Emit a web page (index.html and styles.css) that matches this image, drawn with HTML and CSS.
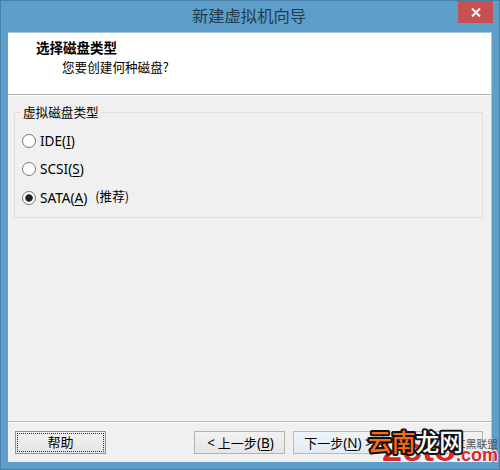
FILE: index.html
```html
<!DOCTYPE html>
<html lang="zh-CN">
<head>
<meta charset="utf-8">
<title>新建虚拟机向导</title>
<link rel="stylesheet" href="styles.css">
</head>
<body>
<div class="window">
  <header class="titlebar">
    <h1>新建虚拟机向导</h1>
    <button class="close"><svg width="10" height="9" viewBox="0 0 10 9"><path d="M1 0.5 9 8.5M9 0.5 1 8.5" stroke="#fff" stroke-width="2"/></svg></button>
  </header>
  <main class="client">
    <section class="intro">
      <h2>选择磁盘类型</h2>
      <p>您要创建何种磁盘?</p>
    </section>
    <section class="content">
      <fieldset class="group">
        <legend>虚拟磁盘类型</legend>
        <label class="option"><span class="radio"></span><span class="name">IDE(<u>I</u>)</span></label>
        <label class="option"><span class="radio"></span><span class="name">SCSI(<u>S</u>)</span></label>
        <label class="option last"><span class="radio checked"></span><span class="name">SATA(<u>A</u>)</span><span class="note">(推荐)</span></label>
      </fieldset>
    </section>
    <footer class="actions">
      <button class="btn help"><span>帮助</span></button>
      <button class="btn back"><i>&lt;</i> 上一步<i>(<u>B</u>)</i></button>
      <button class="btn next">下一步<i>(<u>N</u>) &gt;</i></button>
      <button class="btn cancel"></button>
    </footer>
  </main>
  <svg class="watermark" width="160" height="50" viewBox="0 0 160 50">
    <g class="site">
      <text x="42" y="40.5" class="site-name" textLength="74" lengthAdjust="spacingAndGlyphs">2cto</text>
      <text x="116" y="40.5" class="site-domain" textLength="42" lengthAdjust="spacingAndGlyphs">.com</text>
    </g>
    <text x="115" y="27.5" class="union" textLength="43" lengthAdjust="spacingAndGlyphs">红黑联盟</text>
    <text x="28" y="30.5" class="brand" textLength="95" lengthAdjust="spacingAndGlyphs"><tspan class="orange">云南</tspan><tspan class="white">龙网</tspan></text>
  </svg>
</div>
</body>
</html>
```
FILE: styles.css
```css
* { box-sizing: border-box; }
body { margin: 0; }
.window {
  position: relative;
  width: 500px;
  height: 470px;
  padding: 0 7px 7px;
  border: 1px solid #477fa9;
  background: #5d9eca;
  color: #000;
  font: 12.6px/16px "Noto Sans CJK SC", sans-serif;
  overflow: hidden;
}
.titlebar {
  height: 31px;
  display: flex;
  justify-content: flex-end;
  align-items: flex-start;
}
h1 {
  width: 115px;
  margin: 4px 151px 0 0;
  color: #253c4b;
  font: 400 16.3px/21px "Noto Sans CJK SC", sans-serif;
  white-space: nowrap;
}
.close {
  display: flex;
  align-items: center;
  justify-content: center;
  width: 35px;
  height: 22px;
  margin-right: -1px;
  padding: 0;
  border: 0;
  background: #c75050;
}
.client {
  height: 430px;
  display: flex;
  flex-direction: column;
  border: 1px solid #a6c7dc;
  border-width: 1px 1px 0 0;
  background: #f0f0f0;
}
.intro {
  height: 62px;
  padding: 5px 28px;
  border-bottom: 1px solid #b4b4b4;
  background: #fff;
}
h2 {
  margin: 0;
  font: 700 13.5px/18px "Noto Sans CJK SC", sans-serif;
}
.intro p { margin: 2px 0 0 26px; line-height: 18px; }
.content { flex: 1; padding: 8px 8px 0 6px; border-top: 1px solid #fff; }
.group {
  height: 114px;
  min-width: 0;
  margin: 0;
  padding: 6px 7px 0;
  border: 1px solid #dfdfdf;
}
legend { height: 17px; padding: 0 2px; margin-left: -1px; line-height: 15px; }
.option { display: flex; align-items: center; height: 28px; }
.option.last { height: 29px; }
.radio {
  width: 14px;
  height: 14px;
  margin-right: 4px;
  border: 1px solid #777;
  border-radius: 50%;
  background: #fff;
}
.checked { background: radial-gradient(circle, #222 0 3.4px, #fff 4px); }
.name, .btn i { font-family: "Noto Sans", sans-serif; font-style: normal; }
.name { font-size: 13.6px; }
.note { margin: -3px 0 0 8px; }
u { text-decoration-thickness: 1px; text-underline-offset: 2px; }
.actions {
  display: flex;
  height: 41px;
  padding: 9px 8px 0 7px;
  border-top: 1px solid #b9b9b9;
  box-shadow: inset 0 1px #fff;
}
.btn {
  width: 91px;
  height: 23px;
  padding: 0;
  border: 1px solid #b3b3b3;
  background: linear-gradient(#f2f2f2, #e5e5e5);
  color: #000;
  font: 13px/19px "Noto Sans CJK SC", sans-serif;
  white-space: nowrap;
}
.btn i { font-size: 13.5px; }
.help { padding: 1px; border-color: #579ff0; }
.help span { display: block; height: 19px; border: 1px dotted #333; line-height: 15px; }
.back { margin-left: 88px; padding-left: 2px; }
.next { margin-left: 8px; border-color: #a9bdd0; background: linear-gradient(#f0f4f8, #e2ebf4); }
.cancel { margin-left: 8px; }
.watermark { position: absolute; left: 339px; top: 419px; }
.site text { fill: #d8282b; stroke: #fff; stroke-width: 1.5px; paint-order: stroke; }
.site-name { font: 900 34px "Liberation Sans", sans-serif; }
.site-domain { font: 700 19px "Liberation Sans", sans-serif; }
.union { fill: #555; font: 400 10.5px "Noto Sans CJK SC", sans-serif; }
.brand { font: 500 24px "Noto Sans CJK SC", sans-serif; stroke: #111; stroke-width: 4px; stroke-linejoin: round; paint-order: stroke; }
.orange { fill: #ff6813; }
.white { fill: #fff; }
```
